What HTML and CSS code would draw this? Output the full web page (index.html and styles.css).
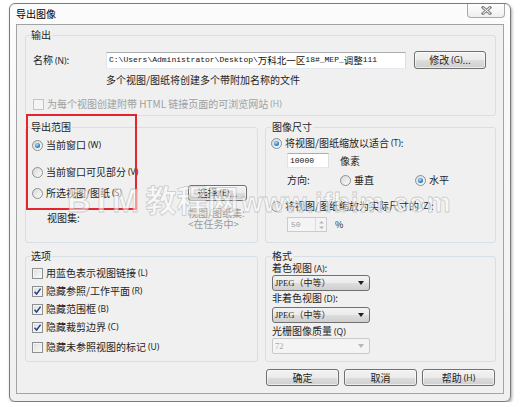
FILE: index.html
```html
<!DOCTYPE html>
<html lang="zh-CN">
<head>
<meta charset="utf-8">
<title>导出图像</title>
<link rel="stylesheet" href="styles.css">
</head>
<body>
<div class="window">
  <div class="titlebar">
    <span class="title">导出图像</span>
    <span class="close">
      <svg width="11" height="9" viewBox="0 0 11 9"><path d="M2 1.5 L9 7.5 M9 1.5 L2 7.5" stroke="#8a8a8a" stroke-width="3" stroke-linecap="square" fill="none"/><path d="M2 1.5 L9 7.5 M9 1.5 L2 7.5" stroke="#ffffff" stroke-width="1" fill="none"/></svg>
    </span>
  </div>
  <div class="client">
    <fieldset class="group g-output">
      <legend>输出</legend>
      <div class="name-row">
        <span class="name-label">名称<span class="mn">(N)</span>:</span>
        <div class="textbox path">C:\Users\Administrator\Desktop\<span class="cjk">万科北一区</span>18#_MEP_<span class="cjk">调整</span>111</div>
        <span class="btn btn-modify">修改<span class="mn">(G)</span>...</span>
      </div>
      <div class="hint">多个视图/图纸将创建多个带附加名称的文件</div>
      <div class="chk disabled"><span class="box"></span>为每个视图创建附带 HTML 链接页面的可浏览网站<span class="mn">(H)</span></div>
    </fieldset>

    <div class="cols">
      <fieldset class="group g-range">
        <legend>导出范围</legend>
        <div class="opt"><span class="radio on"></span>当前窗口<span class="mn">(W)</span></div>
        <div class="opt r2"><span class="radio"></span>当前窗口可见部分<span class="mn">(V)</span></div>
        <div class="opt r3"><span class="radio"></span>所选视图/图纸<span class="mn">(S)</span><span class="btn btn-select">选择<span class="mn">(E)</span>...</span></div>
        <div class="viewset">
          <span class="viewset-label">视图集:</span>
          <span class="viewset-info">视图/图纸集:<br>&lt;在任务中&gt;</span>
        </div>
      </fieldset>

      <fieldset class="group g-size">
        <legend>图像尺寸</legend>
        <div class="opt"><span class="radio on"></span>将视图/图纸缩放以适合<span class="mn">(T)</span>:</div>
        <div class="pxrow"><span class="textbox num">10000</span><span class="unit">像素</span></div>
        <div class="dirrow">
          <span>方向:</span>
          <span class="opt"><span class="radio"></span>垂直</span>
          <span class="opt"><span class="radio on"></span>水平</span>
        </div>
        <div class="opt r4"><span class="radio"></span>将视图/图纸缩放为实际尺寸的<span class="mn">(Z)</span>:</div>
        <div class="spinrow">
          <span class="spin"><span class="spin-val">50</span><span class="spin-btns"><svg width="9" height="12" viewBox="0 0 9 12"><path d="M2 4.5 L4.5 2 L7 4.5 Z M2 7.5 L4.5 10 L7 7.5 Z" fill="#b5b5b5"/></svg></span></span>
          <span class="unit2">%</span>
        </div>
      </fieldset>

      <fieldset class="group g-options">
        <legend>选项</legend>
        <div class="chk"><span class="box"></span>用蓝色表示视图链接<span class="mn">(L)</span></div>
        <div class="chk"><span class="box on"><svg width="9" height="9" viewBox="0 0 9 9"><path d="M1.5 4.8 L3.6 7 L7.6 1.6" stroke="#253f8c" stroke-width="1.5" fill="none"/></svg></span>隐藏参照/工作平面<span class="mn">(R)</span></div>
        <div class="chk"><span class="box on"><svg width="9" height="9" viewBox="0 0 9 9"><path d="M1.5 4.8 L3.6 7 L7.6 1.6" stroke="#253f8c" stroke-width="1.5" fill="none"/></svg></span>隐藏范围框<span class="mn">(B)</span></div>
        <div class="chk"><span class="box on"><svg width="9" height="9" viewBox="0 0 9 9"><path d="M1.5 4.8 L3.6 7 L7.6 1.6" stroke="#253f8c" stroke-width="1.5" fill="none"/></svg></span>隐藏裁剪边界<span class="mn">(C)</span></div>
        <div class="chk last"><span class="box"></span>隐藏未参照视图的标记<span class="mn">(U)</span></div>
      </fieldset>

      <fieldset class="group g-format">
        <legend>格式</legend>
        <div class="flabel">着色视图<span class="mn">(A)</span>:</div>
        <div class="combo"><span class="combo-text"><span class="lat">JPEG</span>（中等）</span><span class="arrow"></span></div>
        <div class="flabel f2">非着色视图<span class="mn">(D)</span>:</div>
        <div class="combo c2"><span class="combo-text"><span class="lat">JPEG</span>（中等）</span><span class="arrow"></span></div>
        <div class="flabel f3">光栅图像质量<span class="mn">(Q)</span></div>
        <div class="combo c3 disabled"><span class="combo-text"><span class="lat">72</span></span><span class="arrow"></span></div>
      </fieldset>
    </div>

    <div class="actions">
      <span class="btn btn-act">确定</span>
      <span class="btn btn-act">取消</span>
      <span class="btn btn-act">帮助<span class="mn">(H)</span></span>
    </div>

    <div class="highlight"></div>
    <div class="watermark"><span class="wm-lat">BIM</span><span class="wm-cjk">教程网</span><span class="wm-url">www.ifbim.com</span></div>
  </div>
</div>
</body>
</html>
```

FILE: styles.css
```css
* { box-sizing: border-box; }

html, body {
  margin: 0;
  padding: 0;
  background: #ffffff;
}

body {
  font-family: "Noto Sans CJK SC", "Noto Sans", sans-serif;
  font-size: 10px;
  line-height: 12px;
  color: #1e1e1e;
}

.mn {
  font-family: "Noto Sans", sans-serif;
  font-size: 8.5px;
  margin-left: 2px;
}

/* window frame */
.window {
  margin: 3px 0 0 9px;
  width: 502px;
  height: 399px;
  border: 1px solid #7b7b7b;
  border-radius: 6px;
  background: linear-gradient(#fcfcfc, #f0f0f0);
  box-shadow: 1px 2px 3px rgba(0, 0, 0, 0.35);
  padding: 0 6px 7px 6px;
  display: flex;
  flex-direction: column;
}

.titlebar {
  height: 20px;
  flex: none;
  display: flex;
  align-items: center;
}

.title {
  font-size: 10px;
  color: #000;
}

.close {
  margin-left: auto;
  margin-right: -1px;
  align-self: flex-start;
  width: 38px;
  height: 14px;
  border: 1px solid #a9a9a9;
  border-top: none;
  border-radius: 0 0 4px 4px;
  background: linear-gradient(#ffffff, #eeeeee);
  display: flex;
  align-items: center;
  justify-content: center;
}

.client {
  position: relative;
  height: 370px;
  flex: none;
  border: 1px solid #a3a3a3;
  background: #f0f0f0;
  padding: 4px 7px 7px 8px;
}

/* group boxes */
.group {
  margin: 0;
  padding: 0;
  border: 1px solid #d5dfe5;
  border-radius: 3px;
  min-width: 0;
}

.group legend {
  padding: 0 1px;
  font-size: 10px;
  line-height: 12px;
  height: 12px;
  color: #1e1e1e;
}

.g-output {
  height: 87px;
  padding: 10px 9px 0 7px;
}
.g-output legend { margin-left: -3px; }

.name-row {
  display: flex;
  align-items: center;
  height: 18px;
}

.name-label {
  width: 73px;
  flex: none;
}

.textbox {
  background: #ffffff;
  border: 1px solid #abadb3;
  border-left-color: #e2e3ea;
  border-right-color: #dbdfe6;
  border-bottom-color: #e3e9ef;
  font-family: "Liberation Mono", monospace;
  font-size: 8px;
  color: #111;
  display: flex;
  align-items: center;
  white-space: nowrap;
  overflow: hidden;
}

.textbox .cjk {
  font-family: "Noto Sans CJK SC", sans-serif;
  font-size: 9.5px;
}

.path {
  width: 300px;
  height: 17px;
  padding-left: 2px;
}

.btn {
  display: flex;
  align-items: center;
  justify-content: center;
  height: 18px;
  border: 1px solid #707070;
  border-radius: 3px;
  background: linear-gradient(#f2f2f2 0%, #ebebeb 50%, #dddddd 51%, #cfcfcf 100%);
  box-shadow: inset 0 0 0 1px rgba(255, 255, 255, 0.6);
  color: #1e1e1e;
  white-space: nowrap;
}

.btn-modify {
  width: 72px;
  margin-left: 8px;
}

.hint {
  margin-top: 5px;
  padding-left: 73px;
}

.chk {
  display: flex;
  align-items: center;
  height: 12px;
}

.box {
  width: 11px;
  height: 11px;
  flex: none;
  margin-right: 3px;
  border: 1px solid #8e8f8f;
  background: linear-gradient(135deg, #dcdcdc, #fbfbfb);
  box-shadow: inset 0 0 0 1px #f4f4f4;
  display: flex;
  align-items: center;
  justify-content: center;
}

.g-output .chk {
  margin-top: 12px;
}

.chk.disabled {
  color: #a0a0a0;
}

.chk.disabled .box {
  border-color: #c4c4c4;
  background: #f4f4f4;
}

.radio {
  position: relative;
  width: 11px;
  height: 11px;
  flex: none;
  margin-right: 3px;
  border-radius: 50%;
  border: 1px solid #8e8f8f;
  background: linear-gradient(135deg, #d8d8d8, #fbfbfb);
}

.radio.on::after {
  content: "";
  position: absolute;
  left: 2px;
  top: 2px;
  width: 5px;
  height: 5px;
  border-radius: 50%;
  background: radial-gradient(circle at 40% 35%, #b9e3fb 0%, #2c87d3 55%, #11508f 100%);
}

.opt {
  display: flex;
  align-items: center;
  height: 16px;
}

/* columns */
.cols {
  display: grid;
  grid-template-columns: 233px 231px;
  grid-template-rows: 122px 112px;
  column-gap: 7px;
  row-gap: 7px;
  margin-top: 5px;
}

.g-range {
  padding: 4px 10px 0 6px;
}
.g-range legend { margin-left: -2px; }

.g-range .r2 { margin-top: 11px; }
.g-range .r3 { margin-top: 5px; }

.btn-select {
  width: 59px;
  height: 16px;
  margin-left: auto;
}

.viewset {
  display: flex;
  margin-top: 6px;
}

.viewset-label {
  padding-left: 15px;
  margin-top: 5px;
}

.viewset-info {
  margin-left: auto;
  width: 59px;
  color: #9a9a9a;
  line-height: 11px;
  white-space: nowrap;
}

.g-size {
  padding: 2px 8px 0 5px;
}
.g-size legend { margin-left: 0; }

.pxrow {
  display: flex;
  align-items: center;
  margin-top: 2px;
  padding-left: 16px;
  height: 15px;
}

.num {
  width: 42px;
  height: 15px;
  padding-left: 2px;
}

.unit { margin-left: 11px; }

.dirrow {
  display: grid;
  grid-template-columns: 53px 75px auto;
  align-items: center;
  margin-top: 4px;
  padding-left: 16px;
  height: 16px;
}

.g-size .r4 { margin-top: 10px; }

.spinrow {
  display: flex;
  align-items: center;
  margin-top: 3px;
  padding-left: 16px;
  height: 15px;
}

.spin {
  display: flex;
  width: 40px;
  height: 15px;
  border: 1px solid #c9cbd0;
  background: #f4f4f4;
}

.spin-val {
  flex: 1;
  font-family: "Liberation Mono", monospace;
  font-size: 8px;
  color: #a0a0a0;
  padding-left: 3px;
  display: flex;
  align-items: center;
}

.spin-btns {
  width: 11px;
  border-left: 1px solid #dcdcdc;
  display: flex;
  align-items: center;
  justify-content: center;
}

.unit2 {
  margin-left: 8px;
  font-size: 9px;
}

.g-options {
  padding: 2px 8px 0 6px;
}
.g-options legend { margin-left: -2px; }

.g-options .chk {
  height: 18px;
}

.g-options .chk.last { margin-top: 2px; }

.g-format {
  padding: 0 8px 0 6px;
}
.g-format legend { margin-left: -1px; }

.flabel {
  height: 12px;
}

.f2 { margin-top: 1px; }
.f3 { margin-top: 2px; }

.combo {
  position: relative;
  margin-top: 1px;
  width: 98px;
  height: 16px;
  border: 1px solid #707070;
  border-radius: 3px;
  background: linear-gradient(#f2f2f2 0%, #ebebeb 50%, #dddddd 51%, #cfcfcf 100%);
  display: flex;
  align-items: center;
  padding-left: 2px;
}

.combo.c2 { margin-top: 3px; }

.combo-text {
  font-size: 9px;
  white-space: nowrap;
}

.combo-text .lat {
  font-family: "Liberation Serif", serif;
  font-size: 8.5px;
}

.arrow {
  margin-left: auto;
  margin-right: 5px;
  width: 0;
  height: 0;
  border-left: 3.5px solid transparent;
  border-right: 3.5px solid transparent;
  border-top: 4px solid #1e1e1e;
}

.combo.disabled {
  border-color: #c9c9c9;
  border-radius: 2px;
  background: #f4f4f4;
  color: #a8a8a8;
}

.combo.disabled .arrow {
  border-top-color: #b8b8b8;
}

.actions {
  display: flex;
  justify-content: flex-end;
  gap: 5px;
  margin-top: 7px;
  padding-right: 1px;
}

.btn-act {
  width: 73px;
  height: 17px;
}

/* red annotation overlay */
.highlight {
  position: absolute;
  left: 9px;
  top: 89px;
  width: 111px;
  height: 96px;
  border: 2px solid #e3262d;
  pointer-events: none;
}

/* watermark overlay */
.watermark {
  position: absolute;
  left: 50px;
  top: 158px;
  line-height: 1;
  white-space: nowrap;
  color: rgba(255, 255, 255, 0.55);
  -webkit-text-stroke: 0.8px rgba(150, 150, 150, 0.45);
  font-weight: bold;
  pointer-events: none;
  display: flex;
  align-items: baseline;
}

.wm-lat {
  font-family: "Liberation Sans", sans-serif;
  font-size: 33px;
  letter-spacing: 6px;
}

.wm-cjk {
  font-family: "Noto Sans CJK SC", sans-serif;
  font-size: 31px;
}

.wm-url {
  font-family: "Liberation Sans", sans-serif;
  font-size: 27px;
  letter-spacing: 1px;
  margin-left: 3px;
}
```
